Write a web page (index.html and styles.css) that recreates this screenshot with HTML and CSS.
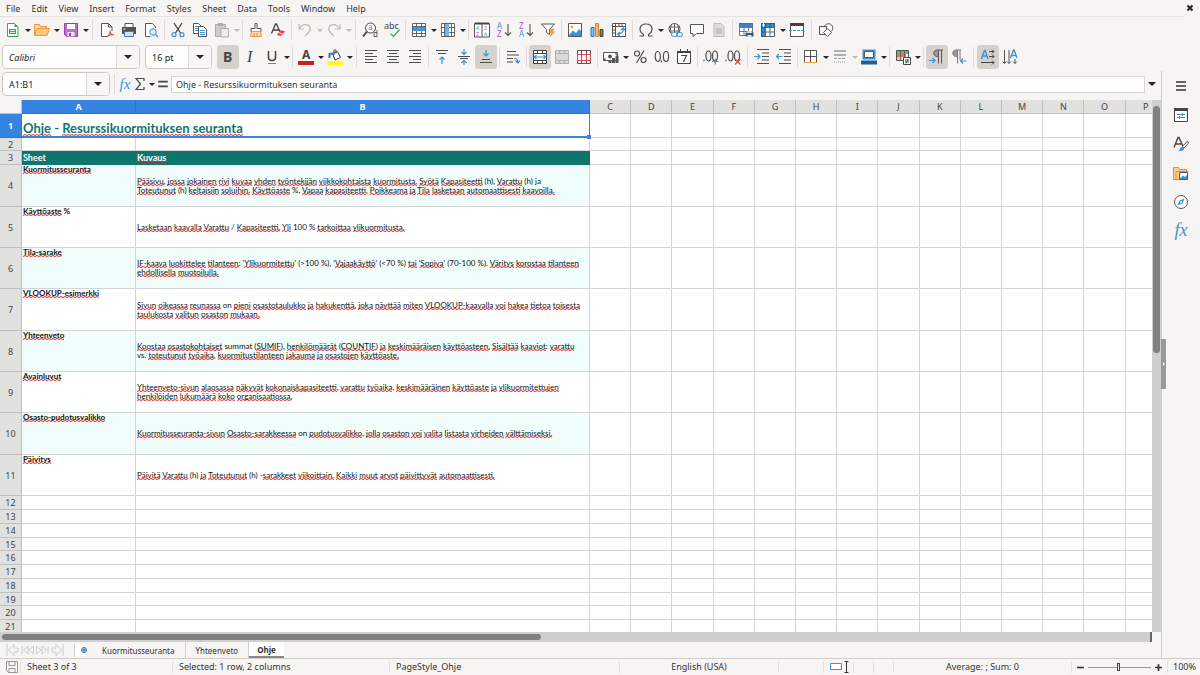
FILE: index.html
```
<!DOCTYPE html>
<html lang="fi">
<head>
	<meta charset="utf-8">
	<title>Ohje</title>
	<link rel="stylesheet" href="styles.css">
</head>
<body>
	<nav class="menubar">
		<button>File</button><button>Edit</button><button>View</button><button>Insert</button><button>Format</button><button>Styles</button><button>Sheet</button><button>Data</button><button>Tools</button><button>Window</button><button>Help</button>
		<button class="close" aria-label="Close document"><svg viewBox="0 0 8 8"><path d="M1.500 1.500L6.500 6.500M6.500 1.500L1.500 6.500" stroke="#222" stroke-width="1.900"/></svg></button>
	</nav>

	<!-- standard toolbar -->
	<div class="toolbar">
		<button class="tool" aria-label="New"><svg viewBox="0 0 16 16"><path d="M2.500 1.500h7l3.500 3.500v9.500h-10.500z" fill="#fff" stroke="#3fa557"/><path d="M9.500 1.500V5H13z" fill="#3fa557"/><path d="M4 7h7v5h-7z" fill="#3fa557"/><path d="M5 8.500h5M5 10.500h5" stroke="#fff" stroke-width=".8"/></svg></button><button class="drop" aria-label="New options"></button>
		<button class="tool" aria-label="Open"><svg viewBox="0 0 16 16"><path d="M.5 13.500V2.500h5l1 2h6v2" fill="#fbd79b" stroke="#e8973a"/><path d="M.5 13.500L3 6.500h12.500l-2.500 7z" fill="#fcc979" stroke="#e8973a"/></svg></button><button class="drop" aria-label="Open options"></button>
		<button class="tool" aria-label="Save"><svg viewBox="0 0 16 16"><path d="M1.500 1.500h13v13h-11l-2-2z" fill="#c46bd2" stroke="#8e44a3"/><path d="M4 2h8v5h-8z" fill="#fff"/><path d="M4.500 10h7v4.500h-7z" fill="#f3e3f6"/><path d="M6 11h2v3h-2z" fill="#8e44a3"/></svg></button><button class="drop" aria-label="Save options"></button>
		<span class="sep wide"></span>
		<button class="tool" aria-label="Export as PDF"><svg viewBox="0 0 16 16"><path d="M13 9V5L9.500 1.500h-7v13h6" fill="#fff" stroke="#555"/><path d="M9.500 1.500V5H13" fill="none" stroke="#555"/><path d="M8 14.500c3-2 3.500-4 3-6c0 2 1 4 4 4.500c-2.500-.5-5 0-7 1.500" fill="none" stroke="#e04a50" stroke-width="1.100"/></svg></button>
		<button class="tool" aria-label="Print"><svg viewBox="0 0 16 16"><path d="M4 5.500v-4h8v4" fill="#fff" stroke="#555"/><path d="M1 5h14v7h-14z" fill="#4f5357"/><path d="M3.500 9.500h9v5h-9z" fill="#cfe6f7" stroke="#3a7fb8"/><path d="M2.500 7h2" stroke="#fff"/></svg></button>
		<button class="tool" aria-label="Print preview"><svg viewBox="0 0 16 16"><path d="M12.500 6V5L9.500 1.500h-7v13h5" fill="#fff" stroke="#555"/><circle cx="10" cy="10" r="3.300" fill="#d8ecfa" stroke="#3a94d6"/><path d="M12.500 12.500l2.500 2.500" stroke="#3a94d6" stroke-width="1.300"/></svg></button>
		<span class="sep"></span>
		<button class="tool" aria-label="Cut"><svg viewBox="0 0 16 16"><path d="M4 1l6.500 10M12 1L5.500 11" stroke="#444" stroke-width="1.300"/><circle cx="4" cy="12.700" r="2" fill="none" stroke="#3a94d6" stroke-width="1.200"/><circle cx="12" cy="12.700" r="2" fill="none" stroke="#3a94d6" stroke-width="1.200"/></svg></button>
		<button class="tool" aria-label="Copy"><svg viewBox="0 0 16 16"><path d="M1.500 1.500h5l2.500 2.500v7.500h-7.500z" fill="#fff" stroke="#555"/><path d="M6.500 4.500h5l3 3v7h-8z" fill="#fff" stroke="#555"/><path d="M3 4.500h3M3 6.500h3M3 8.500h3M8 8.500h5M8 10.500h5M8 12.500h5" stroke="#3a94d6"/></svg></button>
		<button class="tool off" aria-label="Paste" disabled><svg viewBox="0 0 16 16"><path d="M1.500 2.500h10v12h-10z" fill="#ccc" stroke="#aaa"/><path d="M4 1h5v3h-5z" fill="#aaa"/><path d="M7 6.500h7.500v8.500h-7.500z" fill="#eee" stroke="#aaa"/></svg></button><button class="drop off" aria-label="Paste options" disabled></button>
		<span class="sep"></span>
		<button class="tool" aria-label="Clone formatting"><svg viewBox="0 0 16 16"><path d="M7 1.500h2v5h4v3h-10v-3h4z" fill="#fff" stroke="#555"/><path d="M3.500 9.500h9l1 5h-11z" fill="#fcd9a8" stroke="#e8973a"/><path d="M6 11v3M9 11v3" stroke="#e8973a"/></svg></button>
		<button class="tool" aria-label="Clear formatting"><svg viewBox="0 0 16 16"><path d="M1.500 11.500L5.500 2h1L10 10M3 8h6" fill="none" stroke="#444" stroke-width="1.300"/><path d="M7 12.500l4-4.500l4 1.500l-4 4.500l-3-.5z" fill="#e8454d"/><path d="M9 10.500l3.500 1.500" stroke="#fff" stroke-width=".8"/></svg></button>
		<span class="sep"></span>
		<button class="tool off" aria-label="Undo" disabled><svg viewBox="0 0 16 16"><path d="M2 2v5h5M2.500 6.500c3-5 9-5 10.500-1c1 3-1 5-5 8.500" fill="none" stroke="#bbb" stroke-width="1.200"/></svg></button><button class="drop off" aria-label="Undo list" disabled></button>
		<button class="tool off" aria-label="Redo" disabled><svg viewBox="0 0 16 16"><path d="M14 2v5h-5M13.500 6.500c-3-5-9-5-10.500-1c-1 3 1 5 5 8.500" fill="none" stroke="#bbb" stroke-width="1.200"/></svg></button><button class="drop off" aria-label="Redo list" disabled></button>
		<span class="sep wide"></span>
		<button class="tool" aria-label="Find and replace"><svg viewBox="0 0 16 16"><circle cx="8.500" cy="6" r="5" fill="#fff" stroke="#444"/><path d="M5 9.500L1 14.500" stroke="#444" stroke-width="2"/><text x="6" y="8" class="glyph blue">a</text><text x="11" y="15" class="glyph">d</text></svg></button>
		<button class="tool" aria-label="Spelling"><svg viewBox="0 0 16 16"><text x="0" y="7" class="glyph abc">abc</text><path d="M6.500 11.500l3 3l6-7" fill="none" stroke="#3fb56a" stroke-width="1.400"/></svg></button>
		<span class="sep"></span>
		<button class="tool" aria-label="Row"><svg viewBox="0 0 16 16"><path d="M1.500 1.500h13v13h-13z" fill="#fff"/><path d="M1 5h14v4h-14z" fill="#3a9ae0"/><path d="M1.500 1.500h13v13h-13zM5.500 1v4M10.500 1v4M5.500 9v6M10.500 9v6M1.500 11.500h13M1.500 4.500h13" fill="none" stroke="#555" stroke-width=".9"/></svg></button><button class="drop" aria-label="Row options"></button>
		<button class="tool" aria-label="Column"><svg viewBox="0 0 16 16"><path d="M1.500 1.500h13v13h-13z" fill="#fff"/><path d="M5 1h4v14h-4z" fill="#6db6ea"/><path d="M1.500 1.500h13v13h-13zM1 5.500h4M1 10.500h4M9 5.500h6M9 10.500h6M11.500 1v14M4.500 1v14" fill="none" stroke="#555" stroke-width=".9"/></svg></button><button class="drop" aria-label="Column options"></button>
		<span class="sep"></span>
		<button class="tool" aria-label="Sort"><svg viewBox="0 0 16 16"><path d="M.5 1.500h15v13.500h-15zM8 2v13" fill="#fff" stroke="#555"/><path d="M1 1.500h14" stroke="#444" stroke-width="2"/><text x="2" y="8" class="mini blue">A</text><text x="2" y="14" class="mini pink">Z</text><text x="10" y="8" class="mini pink">Z</text><text x="10" y="14" class="mini blue">A</text></svg></button>
		<button class="tool" aria-label="Sort ascending"><svg viewBox="0 0 16 16"><text x="1" y="7" class="glyph blue">A</text><text x="1" y="15" class="glyph pink">Z</text><path d="M12 2v11.500M9 10.500l3 3l3-3" fill="none" stroke="#555" stroke-width="1.100"/></svg></button>
		<button class="tool" aria-label="Sort descending"><svg viewBox="0 0 16 16"><text x="1" y="7" class="glyph pink">Z</text><text x="1" y="15" class="glyph blue">A</text><path d="M12 2v11.500M9 10.500l3 3l3-3" fill="none" stroke="#555" stroke-width="1.100"/></svg></button>
		<button class="tool" aria-label="AutoFilter"><svg viewBox="0 0 16 16"><path d="M1.500 2h13L9.500 7.500v5l-3-2v-3z" fill="#fff" stroke="#555"/><path d="M11 6.500h3.500l-1.500 3h2.500L9.500 15.500l1.500-4.500h-2z" fill="#f0a13c"/></svg></button>
		<span class="sep"></span>
		<button class="tool" aria-label="Image"><svg viewBox="0 0 16 16"><path d="M1.500 1.500h13v13h-13z" fill="#fff" stroke="#555"/><path d="M2 13l4-4.500l3 2.500l3-4l2 2v5h-12z" fill="#3a94d6"/><circle cx="5" cy="5" r="1.400" fill="#f0a13c"/></svg></button>
		<button class="tool" aria-label="Chart"><svg viewBox="0 0 16 16"><path d="M2 5.500h3v9h-3z" fill="#7dc1ef" stroke="#2a7cc0"/><path d="M6.500 1.500h3v13h-3z" fill="#f8b763" stroke="#d98528"/><path d="M11 7.500h3v7h-3z" fill="#777" stroke="#444"/></svg></button>
		<button class="tool" aria-label="Pivot table"><svg viewBox="0 0 16 16"><path d="M1.500 1.500h13v13h-13z" fill="#fff" stroke="#555"/><path d="M1.500 4.500h13M4.500 1.500v13M8 2v2M11 2v2M2 8h2M2 11h2" stroke="#555"/><path d="M10 8l2.500-2l1.500 2.500M12.500 6c0 4-2 6-6 6.500M9 10l-2.500 2.500l2.500 1.500" fill="none" stroke="#3a94d6" stroke-width="1.200"/></svg></button>
		<span class="sep"></span>
		<button class="tool" aria-label="Special character"><svg viewBox="0 0 16 16"><path d="M1.500 14h4v-1.500C.5 9.500.5 2 8 2s7.500 7.500 2.500 10.500v1.500h4" fill="none" stroke="#4d4d4d" stroke-width="1.200"/></svg></button><button class="drop" aria-label="More characters"></button>
		<button class="tool" aria-label="Hyperlink"><svg viewBox="0 0 16 16"><circle cx="7.500" cy="7" r="5.500" fill="#fff" stroke="#555"/><path d="M2 5h11M2 9h11M7.500 1.500v11M5 2c-2 3-2 7 0 10M10 2c2 3 2 7 0 10" fill="none" stroke="#555" stroke-width=".9"/><rect x="4.500" y="10.500" width="6" height="4" rx="2" fill="#fff" stroke="#3a94d6"/><rect x="9.500" y="10.500" width="6" height="4" rx="2" fill="none" stroke="#3a94d6"/></svg></button>
		<button class="tool" aria-label="Comment"><svg viewBox="0 0 16 16"><path d="M1.500 2.500h13v9h-7l-3.500 3v-3h-2.500z" fill="#fff" stroke="#555"/></svg></button>
		<button class="tool off" aria-label="Headers and footers" disabled><svg viewBox="0 0 16 16"><path d="M3 1.500h7l3 3v10h-10z" fill="#ddd" stroke="#bbb"/><path d="M5 6h6v6h-6z" fill="#c4c4c4"/></svg></button>
		<span class="sep"></span>
		<button class="tool" aria-label="Define print area"><svg viewBox="0 0 16 16"><path d="M1.500 1.500h13v12h-13z" fill="#fff"/><path d="M1 1h14v4h-14z" fill="#2e8ad8"/><path d="M1.500 1.500h13v12h-13zM6 1v13M10.500 1v13M1 5.500h14M1 9.500h14" fill="none" stroke="#5a6c7c" stroke-width=".9"/><path d="M7.500 10.500h8v4h-8z" fill="#4f5357"/><path d="M9.500 9h4v2h-4zM9.500 13h4v2.500h-4z" fill="#cfe6f7"/></svg></button>
		<button class="tool" aria-label="Freeze rows and columns"><svg viewBox="0 0 16 16"><path d="M1.500 1.500h13v13h-13z" fill="#fff"/><path d="M1 1h14v4h-14zM1 1h4v14h-4z" fill="#2e8ad8"/><path d="M1.500 1.500h13v13h-13zM5.500 1v14M10 1v14M1 5.500h14M1 10h14" fill="none" stroke="#456" stroke-width=".9"/><path d="M2 3h3M3.500 1v4" stroke="#fff"/></svg></button><button class="drop" aria-label="Freeze options"></button>
		<button class="tool" aria-label="Split window"><svg viewBox="0 0 16 16"><path d="M1.500 2.500h13v12h-13z" fill="#fff" stroke="#555"/><path d="M1 2.500h14" stroke="#444" stroke-width="3"/><path d="M0 8.500h16" stroke="#3a94d6" stroke-dasharray="3 1"/></svg></button>
		<span class="sep wide"></span>
		<button class="tool" aria-label="Show draw functions"><svg viewBox="0 0 16 16"><circle cx="10.500" cy="6" r="4.300" fill="#fff" stroke="#555"/><path d="M1.500 4.500h7v8h-7z" fill="#f5f4f3" stroke="#555"/><path d="M5.500 10.500l4-4l4 4l-4 4z" fill="#fff" stroke="#555"/></svg></button>
	</div>

	<!-- formatting toolbar -->
	<div class="toolbar">
		<div class="combo font-name"><input type="text" aria-label="Font name" value="Calibri"><button aria-label="Font list"></button></div>
		<div class="combo font-size"><input type="text" aria-label="Font size" value="16 pt"><button aria-label="Size list"></button></div>
		<button class="tool on" aria-label="Bold"><svg viewBox="0 0 16 16"><text x="3" y="13" class="letter bold">B</text></svg></button>
		<button class="tool" aria-label="Italic"><svg viewBox="0 0 16 16"><text x="5" y="13" class="letter italic">I</text></svg></button>
		<button class="tool" aria-label="Underline"><svg viewBox="0 0 16 16"><path d="M4.500 2v6.500c0 4 7 4 7 0V2" fill="none" stroke="#444" stroke-width="1.500"/><path d="M4 14.500h8" stroke="#3a94d6"/></svg></button><button class="drop" aria-label="Underline options"></button>
		<span class="sep"></span>
		<button class="tool" aria-label="Font color"><svg viewBox="0 0 16 16"><text x="4" y="10" class="letter small">A</text><path d="M0 12h16v4h-16z" fill="#c9211e"/></svg></button><button class="drop" aria-label="Font colors"></button>
		<button class="tool" aria-label="Background color"><svg viewBox="0 0 16 16"><path d="M5.500 4.500l5-2l3 6l-5.500 2.500z" fill="#fff" stroke="#444"/><path d="M7 6V1.500c0-1 2-1 2 0v3" fill="none" stroke="#444"/><path d="M2.500 9V5l4-.5" fill="none" stroke="#2a7cc0" stroke-width="2"/><path d="M0 12h16v4h-16z" fill="#ff0"/></svg></button><button class="drop" aria-label="Background colors"></button>
		<span class="sep wide"></span>
		<button class="tool" aria-label="Align left"><svg viewBox="0 0 16 16"><path d="M2 1.500h12M2 4.500h8M2 7.500h12M2 10.500h8M2 13.500h12" stroke="#4d4d4d"/></svg></button>
		<button class="tool" aria-label="Center"><svg viewBox="0 0 16 16"><path d="M2 1.500h12M4 4.500h8M2 7.500h12M4 10.500h8M2 13.500h12" stroke="#4d4d4d"/></svg></button>
		<button class="tool" aria-label="Align right"><svg viewBox="0 0 16 16"><path d="M2 1.500h12M6 4.500h8M2 7.500h12M6 10.500h8M2 13.500h12" stroke="#4d4d4d"/></svg></button>
		<span class="sep"></span>
		<button class="tool" aria-label="Align top"><svg viewBox="0 0 16 16"><path d="M2 1.500h12M4 4.500h8" stroke="#4d4d4d"/><path d="M8 15V8M5.500 10.500L8 8l2.500 2.500" fill="none" stroke="#3a94d6" stroke-width="1.200"/></svg></button>
		<button class="tool" aria-label="Center vertically"><svg viewBox="0 0 16 16"><path d="M2 7.500h12M4 9.500h8" stroke="#4d4d4d"/><path d="M8 0v5M5.500 3L8 5.500L10.500 3M8 16v-4.500M5.500 14L8 11.500l2.500 2.500" fill="none" stroke="#3a94d6" stroke-width="1.200"/></svg></button>
		<button class="tool on" aria-label="Align bottom"><svg viewBox="0 0 16 16"><path d="M2 13.500h12M4 10.500h8" stroke="#4d4d4d"/><path d="M8 1v6M5.500 4.500L8 7l2.500-2.500" fill="none" stroke="#3a94d6" stroke-width="1.200"/></svg></button>
		<span class="sep"></span>
		<button class="tool" aria-label="Wrap text"><svg viewBox="0 0 16 16"><path d="M2 2.500h9M2 6h12M2 9.500h6M2 13h6" stroke="#4d4d4d"/><path d="M9 9.500c3 0 4 1 4 4M10.500 11.500l2.500 2.500l2-2.500" fill="none" stroke="#3a94d6" stroke-width="1.200"/></svg></button>
		<span class="sep"></span>
		<button class="tool on" aria-label="Merge and center"><svg viewBox="0 0 16 16"><path d="M1.500 1.500h13v13h-13z" fill="#fff"/><path d="M1.500 1.500h13v13h-13zM5.500 1v4M10.500 1v4M5.500 11v4M10.500 11v4M1 4.500h14M1 11.500h14" fill="none" stroke="#444"/><path d="M2.500 8h11M4.500 6L2.500 8l2 2M11.500 6l2 2l-2 2" fill="none" stroke="#3a94d6" stroke-width="1.200"/></svg></button>
		<button class="tool off" aria-label="Merge cells" disabled><svg viewBox="0 0 16 16"><path d="M1.500 1.500h13v13h-13zM5.500 1v4M10.500 1v4M5.500 11v4M10.500 11v4M1 4.500h14M1 11.500h14" fill="#d9d9d9" stroke="#b0b0b0"/></svg></button>
		<button class="tool" aria-label="Split cells"><svg viewBox="0 0 16 16"><path d="M1.500 1.500h13v13h-13zM5.500 1v14M10.500 1v14M1 5.500h14M1 11.500h14" fill="#fff" stroke="#555"/><path d="M1.500 5.500v6h13v-6zM5.500 6v5M10.500 6v5" fill="#fff" stroke="#e04a50"/></svg></button>
		<span class="sep"></span>
		<button class="tool" aria-label="Format as currency"><svg viewBox="0 0 16 16"><path d="M.5 3.500h14v8h-14z" fill="#fff" stroke="#555"/><circle cx="7" cy="7.500" r="2" fill="#555"/><path d="M1 12v-2h2M12 5h2v2" fill="none" stroke="#444"/><path d="M9 9h3v5h-3zM12.500 7h3v7h-3zM5.500 11h3v3h-3z" fill="#555"/></svg></button><button class="drop" aria-label="Currency list"></button>
		<button class="tool" aria-label="Format as percent"><svg viewBox="0 0 16 16"><circle cx="5" cy="4.500" r="2.500" fill="none" stroke="#4d4d4d" stroke-width="1.200"/><circle cx="11.500" cy="11" r="2.500" fill="none" stroke="#4d4d4d" stroke-width="1.200"/><path d="M12 1.500L4.500 14" stroke="#4d4d4d" stroke-width="1.200"/></svg></button>
		<button class="tool" aria-label="Format as number"><svg viewBox="0 0 16 16"><ellipse cx="3.800" cy="7.500" rx="2.600" ry="5" fill="none" stroke="#4d4d4d" stroke-width="1.200"/><ellipse cx="12" cy="7.500" rx="2.600" ry="5" fill="none" stroke="#4d4d4d" stroke-width="1.200"/><path d="M7.500 11.500v2" stroke="#4d4d4d" stroke-width="1.200"/></svg></button>
		<button class="tool" aria-label="Format as date"><svg viewBox="0 0 16 16"><path d="M1.500 2.500h13v12h-13z" fill="#fff" stroke="#444"/><path d="M1 3h14" stroke="#444" stroke-width="2"/><path d="M4.500 0v3M11.500 0v3" stroke="#444"/><path d="M5 6.500h5.500L7.500 13" fill="none" stroke="#444" stroke-width="1.200"/></svg></button>
		<span class="sep"></span>
		<button class="tool" aria-label="Add decimal place"><svg viewBox="0 0 16 16"><path d="M1 10.500v2" stroke="#4d4d4d"/><ellipse cx="5.500" cy="7" rx="2.500" ry="5" fill="none" stroke="#4d4d4d" stroke-width="1.200"/><ellipse cx="12" cy="7" rx="2.500" ry="5" fill="none" stroke="#4d4d4d" stroke-width="1.200"/><path d="M9 12.500h6.500M12.300 9.500v6" stroke="#3a94d6" stroke-width="1.200"/></svg></button>
		<button class="tool" aria-label="Delete decimal place"><svg viewBox="0 0 16 16"><path d="M1 10.500v2" stroke="#4d4d4d"/><ellipse cx="5.500" cy="7" rx="2.500" ry="5" fill="none" stroke="#4d4d4d" stroke-width="1.200"/><ellipse cx="12" cy="7" rx="2.500" ry="5" fill="none" stroke="#4d4d4d" stroke-width="1.200"/><path d="M10 10l5.500 5.500M15.500 10L10 15.500" stroke="#e8454d" stroke-width="1.200"/></svg></button>
		<span class="sep wide"></span>
		<button class="tool" aria-label="Increase indent"><svg viewBox="0 0 16 16"><path d="M3 .5h12M8 4h7M8 7.500h7M8 11h7M3 14.500h12" stroke="#4d4d4d"/><path d="M0 7.500h6M3.500 5L6 7.500L3.500 10" fill="none" stroke="#3a94d6" stroke-width="1.200"/></svg></button>
		<button class="tool" aria-label="Decrease indent"><svg viewBox="0 0 16 16"><path d="M3 .5h12M8 4h7M8 7.500h7M8 11h7M3 14.500h12" stroke="#4d4d4d"/><path d="M6.500 7.500h-6M3 5L.5 7.500L3 10" fill="none" stroke="#3a94d6" stroke-width="1.200"/></svg></button>
		<span class="sep"></span>
		<button class="tool" aria-label="Borders"><svg viewBox="0 0 16 16"><path d="M1.500 1.500h12v12h-12zM7.500 1.500v12M1.500 7.500h12" fill="#fff" stroke="#555"/><path d="M1 13.500h13" stroke="#f0a13c"/></svg></button><button class="drop" aria-label="Border list"></button>
		<button class="tool off" aria-label="Border style" disabled><svg viewBox="0 0 16 16"><path d="M2 2h12M2 6h12" stroke="#999" stroke-width="1.500"/><path d="M2 9.500h12" stroke="#999" stroke-dasharray="3 1"/><path d="M2 13h12" stroke="#999" stroke-dasharray="1 1"/></svg></button><button class="drop off" aria-label="Border styles" disabled></button>
		<button class="tool" aria-label="Border color"><svg viewBox="0 0 16 16"><path d="M2.500 1.500h11v8h-11z" fill="#fff" stroke="#4b8fc8" stroke-width="2"/><path d="M3.500 2.500h9v6h-9z" fill="#fff" stroke="#555"/><path d="M0 11.500h16v4h-16z" fill="#1f5f9e"/></svg></button><button class="drop" aria-label="Border colors"></button>
		<span class="sep"></span>
		<button class="tool" aria-label="Conditional formatting"><svg viewBox="0 0 16 16"><path d="M1.500 1.500h12v10h-12z" fill="#fff" stroke="#555"/><path d="M2 2h11v3h-11z" fill="#62b878"/><path d="M2 5h9v3h-9z" fill="#e8735a"/><path d="M2 8h5v3h-5z" fill="#f8c779"/><path d="M5.500 1v10M9.500 1v10" stroke="#555" stroke-width=".7"/><path d="M8.500 8.500h7v7h-7z" fill="#fff" stroke="#444"/><path d="M10 11h4M10 13h4M13 10l-2 4.500" stroke="#444" stroke-width=".9"/></svg></button><button class="drop" aria-label="Conditional formats"></button>
		<span class="sep"></span>
		<button class="tool on" aria-label="Left to right"><svg viewBox="0 0 16 16"><path d="M9.500 1h-1c-5 0-5 6.500 0 6.500h1z" fill="#999" stroke="#555"/><path d="M9.500 1h4.500M9.500 1v13.500M12.500 1v13.500" stroke="#555"/><path d="M0 11.500h6M3.500 9L6 11.500L3.500 14" fill="none" stroke="#3a94d6" stroke-width="1.200"/></svg></button>
		<button class="tool" aria-label="Right to left"><svg viewBox="0 0 16 16"><path d="M6.500 1h-1c-5 0-5 6.500 0 6.500h1z" fill="#999" stroke="#777"/><path d="M6.500 1h3.500M6.500 1v13.500M9 1v10" stroke="#777"/><path d="M15.500 12h-6M12 9.500L9.500 12l2.500 2.500" fill="none" stroke="#3a94d6" stroke-width="1.200"/></svg></button>
		<span class="sep wide"></span>
		<button class="tool on" aria-label="Text direction from left to right"><svg viewBox="0 0 16 16"><path d="M1.500 10L4.500 1.500h.6L8 10M2.500 7h5" fill="none" stroke="#3a94d6" stroke-width="1.400"/><path d="M9 2.500h5M12 .5l2 2l-2 2M9 7.500h5M12 5.500l2 2l-2 2M1 13.500h13M12 11.500l2 2l-2 2" fill="none" stroke="#444"/></svg></button>
		<button class="tool" aria-label="Text direction from top to bottom"><svg viewBox="0 0 16 16"><path d="M8.500 9L11.500 1h.6L15 9M9.500 6.500h5" fill="none" stroke="#3a94d6" stroke-width="1.400"/><path d="M2.500 1v13.500M.5 12.500l2 2l2-2M7 1v13.500M5 12.500l2 2l2-2M13 10v4.500M11 12.500l2 2l2-2" fill="none" stroke="#555"/></svg></button>
	</div>

	<div class="workspace">
		<main class="document">
			<div class="formula-bar">
				<div class="combo name-box"><input type="text" aria-label="Name box" value="A1:B1"><button aria-label="Name list"></button></div>
				<span class="sep"></span>
				<button class="fx" aria-label="Function wizard"><i>fx</i></button>
				<button class="sum" aria-label="Sum"><svg viewBox="0 0 12 14"><path d="M10 4V1.500H2L6.500 7L2 12.500h8V10" fill="none" stroke="#4d4d4d" stroke-width="1.200"/></svg></button><button class="drop" aria-label="Select function"></button>
				<button class="equals" aria-label="Formula"><svg viewBox="0 0 10 8"><path d="M1 2h8M1 6h8" stroke="#444" stroke-width="1.500"/></svg></button>
				<input class="formula" type="text" aria-label="Input line" value="Ohje - Resurssikuormituksen seuranta">
				<button class="drop big" aria-label="Expand formula bar"></button>
			</div>

			<div class="sheet-area">
				<div class="sheet">
					<table>
						<colgroup><col class="col-head"><col class="col-a"><col class="col-b"><col><col><col><col><col><col><col><col><col><col><col><col><col><col></colgroup>
						<thead>
							<tr><th></th><th class="picked">A</th><th class="picked">B</th><th>C</th><th>D</th><th>E</th><th>F</th><th>G</th><th>H</th><th>I</th><th>J</th><th>K</th><th>L</th><th>M</th><th>N</th><th>O</th><th>P</th></tr>
						</thead>
						<tbody>
							<tr class="title"><th class="picked">1</th><td colspan="2" class="selected"><u>Ohje</u> - <u>Resurssikuormituksen</u> <u>seuranta</u><span class="handle"></span></td><td></td><td></td><td></td><td></td><td></td><td></td><td></td><td></td><td></td><td></td><td></td><td></td><td></td><td></td></tr>
							<tr class="low"><th>2</th><td></td><td></td><td></td><td></td><td></td><td></td><td></td><td></td><td></td><td></td><td></td><td></td><td></td><td></td><td></td><td></td></tr>
							<tr class="heading"><th>3</th><td class="sheet-label">Sheet</td><td><u>Kuvaus</u></td><td></td><td></td><td></td><td></td><td></td><td></td><td></td><td></td><td></td><td></td><td></td><td></td><td></td><td></td></tr>
							<tr class="entry tint"><th>4</th><td><u>Kuormitusseuranta</u></td><td><u>Pääsivu</u>, <u>jossa</u> <u>jokainen</u> <u>rivi</u> <u>kuvaa</u> <u>yhden</u> <u>työntekijän</u> <u>viikkokohtaista</u> <u>kuormitusta.</u> <u>Syötä</u> <u>Kapasiteetti</u> (h), <u>Varattu</u> (h) ja<br><u>Toteutunut</u> (h) <u>keltaisiin</u> <u>soluihin.</u> <u>Käyttöaste</u> %, <u>Vapaa</u> <u>kapasiteetti</u>, <u>Poikkeama</u> <u>ja</u> <u>Tila</u> <u>lasketaan</u> <u>automaattisesti</u> <u>kaavoilla.</u></td><td></td><td></td><td></td><td></td><td></td><td></td><td></td><td></td><td></td><td></td><td></td><td></td><td></td><td></td></tr>
							<tr class="entry"><th>5</th><td><u>Käyttöaste</u> %</td><td><u>Lasketaan</u> <u>kaavalla</u> <u>Varattu</u> / <u>Kapasiteetti.</u> <u>Yli</u> 100 % <u>tarkoittaa</u> <u>ylikuormitusta.</u></td><td></td><td></td><td></td><td></td><td></td><td></td><td></td><td></td><td></td><td></td><td></td><td></td><td></td><td></td></tr>
							<tr class="entry tint"><th>6</th><td><u>Tila-sarake</u></td><td><u>IF-kaava</u> <u>luokittelee</u> <u>tilanteen</u>: '<u>Ylikuormitettu</u>' (&gt;100 %), '<u>Vajaakäyttö</u>' (&lt;70 %) <u>tai</u> '<u>Sopiva</u>' (70-100 %). <u>Väritys</u> <u>korostaa</u> <u>tilanteen</u><br><u>ehdollisella</u> <u>muotoilulla.</u></td><td></td><td></td><td></td><td></td><td></td><td></td><td></td><td></td><td></td><td></td><td></td><td></td><td></td><td></td></tr>
							<tr class="entry"><th>7</th><td><u>VLOOKUP-esimerkki</u></td><td><u>Sivun</u> <u>oikeassa</u> <u>reunassa</u> on <u>pieni</u> <u>osastotaulukko</u> <u>ja</u> <u>hakukenttä</u>, <u>joka</u> <u>näyttää</u> <u>miten</u> <u>VLOOKUP-kaavalla</u> <u>voi</u> <u>hakea</u> <u>tietoa</u> <u>toisesta</u><br><u>taulukosta</u> <u>valitun</u> <u>osaston</u> <u>mukaan.</u></td><td></td><td></td><td></td><td></td><td></td><td></td><td></td><td></td><td></td><td></td><td></td><td></td><td></td><td></td></tr>
							<tr class="entry tint"><th>8</th><td><u>Yhteenveto</u></td><td><u>Koostaa</u> <u>osastokohtaiset</u> summat (<u>SUMIF</u>), <u>henkilömäärät</u> (<u>COUNTIF</u>) <u>ja</u> <u>keskimääräisen</u> <u>käyttöasteen.</u> <u>Sisältää</u> <u>kaaviot</u>: <u>varattu</u><br>vs. <u>toteutunut</u> <u>työaika</u>, <u>kuormitustilanteen</u> <u>jakauma</u> <u>ja</u> <u>osastojen</u> <u>käyttöaste.</u></td><td></td><td></td><td></td><td></td><td></td><td></td><td></td><td></td><td></td><td></td><td></td><td></td><td></td><td></td></tr>
							<tr class="entry"><th>9</th><td><u>Avainluvut</u></td><td><u>Yhteenveto-sivun</u> <u>alaosassa</u> <u>näkyvät</u> <u>kokonaiskapasiteetti</u>, <u>varattu</u> <u>työaika</u>, <u>keskimääräinen</u> <u>käyttöaste</u> <u>ja</u> <u>ylikuormitettujen</u><br><u>henkilöiden</u> <u>lukumäärä</u> <u>koko</u> <u>organisaatiossa.</u></td><td></td><td></td><td></td><td></td><td></td><td></td><td></td><td></td><td></td><td></td><td></td><td></td><td></td><td></td></tr>
							<tr class="entry tint"><th>10</th><td><u>Osasto-pudotusvalikko</u></td><td><u>Kuormitusseuranta-sivun</u> <u>Osasto-sarakkeessa</u> on <u>pudotusvalikko</u>, <u>jolla</u> <u>osaston</u> <u>voi</u> <u>valita</u> <u>listasta</u> <u>virheiden</u> <u>välttämiseksi.</u></td><td></td><td></td><td></td><td></td><td></td><td></td><td></td><td></td><td></td><td></td><td></td><td></td><td></td><td></td></tr>
							<tr class="entry"><th>11</th><td><u>Päivitys</u></td><td><u>Päivitä</u> <u>Varattu</u> (h) <u>ja</u> <u>Toteutunut</u> (h) -<u>sarakkeet</u> <u>viikoittain.</u> <u>Kaikki</u> <u>muut</u> <u>arvot</u> <u>päivittyvät</u> <u>automaattisesti.</u></td><td></td><td></td><td></td><td></td><td></td><td></td><td></td><td></td><td></td><td></td><td></td><td></td><td></td><td></td></tr>
							<tr><th>12</th><td></td><td></td><td></td><td></td><td></td><td></td><td></td><td></td><td></td><td></td><td></td><td></td><td></td><td></td><td></td><td></td></tr>
							<tr><th>13</th><td></td><td></td><td></td><td></td><td></td><td></td><td></td><td></td><td></td><td></td><td></td><td></td><td></td><td></td><td></td><td></td></tr>
							<tr><th>14</th><td></td><td></td><td></td><td></td><td></td><td></td><td></td><td></td><td></td><td></td><td></td><td></td><td></td><td></td><td></td><td></td></tr>
							<tr class="low"><th>15</th><td></td><td></td><td></td><td></td><td></td><td></td><td></td><td></td><td></td><td></td><td></td><td></td><td></td><td></td><td></td><td></td></tr>
							<tr><th>16</th><td></td><td></td><td></td><td></td><td></td><td></td><td></td><td></td><td></td><td></td><td></td><td></td><td></td><td></td><td></td><td></td></tr>
							<tr><th>17</th><td></td><td></td><td></td><td></td><td></td><td></td><td></td><td></td><td></td><td></td><td></td><td></td><td></td><td></td><td></td><td></td></tr>
							<tr><th>18</th><td></td><td></td><td></td><td></td><td></td><td></td><td></td><td></td><td></td><td></td><td></td><td></td><td></td><td></td><td></td><td></td></tr>
							<tr class="low"><th>19</th><td></td><td></td><td></td><td></td><td></td><td></td><td></td><td></td><td></td><td></td><td></td><td></td><td></td><td></td><td></td><td></td></tr>
							<tr><th>20</th><td></td><td></td><td></td><td></td><td></td><td></td><td></td><td></td><td></td><td></td><td></td><td></td><td></td><td></td><td></td><td></td></tr>
							<tr><th>21</th><td></td><td></td><td></td><td></td><td></td><td></td><td></td><td></td><td></td><td></td><td></td><td></td><td></td><td></td><td></td><td></td></tr>
						</tbody>
					</table>
				</div>
				<div class="vscroll"><div class="thumb"></div></div>
			</div>
			<div class="hscroll"><div class="thumb"></div></div>

			<div class="tabs">
				<button class="nav" aria-label="First sheet"><svg viewBox="0 0 14 14"><path d="M1.500 1v12M12.500 5h-4V1.500L3 7l5.500 5.500V9h4z" fill="none" stroke="#ccc"/></svg></button>
				<button class="nav" aria-label="Previous sheet"><svg viewBox="0 0 14 14"><path d="M1.500 3v8M7.500 3L3 7l4.500 4zM13 3L8.500 7l4.500 4z" fill="none" stroke="#ccc"/></svg></button>
				<button class="nav" aria-label="Next sheet"><svg viewBox="0 0 14 14"><path d="M12.500 3v8M6.500 3L11 7l-4.500 4zM1 3l4.500 4L1 11z" fill="none" stroke="#ccc"/></svg></button>
				<button class="nav" aria-label="Last sheet"><svg viewBox="0 0 14 14"><path d="M12.500 1v12M1.500 5h4V1.500L11 7l-5.500 5.500V9h-4z" fill="none" stroke="#ccc"/></svg></button>
				<button class="add" aria-label="Add sheet"><svg viewBox="0 0 14 14"><path d="M0 1h8l3 3v9h-11z" fill="#fff"/><path d="M.5 1v12.500" stroke="#ccc"/><circle cx="10" cy="7" r="2.500" fill="#fff" stroke="#2a6cb8"/><path d="M8 7h4M10 5v4" stroke="#2a6cb8"/></svg></button>
				<button class="tab">Kuormitusseuranta</button>
				<button class="tab">Yhteenveto</button>
				<button class="tab current">Ohje</button>
			</div>
		</main>

		<aside class="sidebar">
			<button class="grip" aria-label="Hide sidebar"></button>
			<button aria-label="Sidebar settings"><svg viewBox="0 0 16 16"><path d="M3 4h10M3 8h10M3 12h10" stroke="#333" stroke-width="1.500"/></svg></button>
			<button aria-label="Properties"><svg viewBox="0 0 16 16"><path d="M1.500 1.500h13v13h-13z" fill="#fff" stroke="#444"/><path d="M1 2.500h14" stroke="#444" stroke-width="3"/><path d="M4 7.500h8M4 10.500h8M9.500 6v3M6.500 9v3" stroke="#3a94d6"/></svg></button>
			<button aria-label="Styles"><svg viewBox="0 0 16 16"><path d="M1 11.500L5 1.500h1l4 9M2.500 8h6" fill="none" stroke="#444" stroke-width="1.400"/><path d="M14.500 5L9.500 10.500l1.500 1.500L15.500 7z" fill="#fff" stroke="#555"/><path d="M9 11c2 0 2.500 1 2 2.500c-1 1.500-3 1.500-6 1.500c2-.5 2-4 4-4z" fill="#3a94d6"/></svg></button>
			<button aria-label="Gallery"><svg viewBox="0 0 16 16"><path d="M.5 14.500v-12h5l1 2h7v10z" fill="#fcd08c" stroke="#e8873a"/><path d="M3 14.500V6.500h12.500" fill="none" stroke="#e8873a"/><path d="M6.500 7.500h8v7h-8z" fill="#fff" stroke="#456"/><path d="M7 13.500l3-3l2 1.500l2-2v4h-7z" fill="#3a94d6"/></svg></button>
			<button aria-label="Navigator"><svg viewBox="0 0 16 16"><circle cx="8" cy="8" r="6.500" fill="#fff" stroke="#555"/><path d="M11.500 4.500L9.500 9.500L4.500 11.500L6.500 6.500z" fill="#3a94d6"/><circle cx="8" cy="8" r="1" fill="#fff"/></svg></button>
			<button class="fx" aria-label="Functions"><i>fx</i></button>
		</aside>
	</div>

	<footer class="status">
		<svg class="disk" viewBox="0 0 12 12"><path d="M.5.5h11v11h-9l-2-2zM3 1v3.500h6V1M3 11.500V7.500h6v4" fill="none" stroke="#999"/></svg>
		<span class="part sheets">Sheet 3 of 3</span>
		<span class="part picked-info">Selected: 1 row, 2 columns</span>
		<span class="part style">PageStyle_Ohje</span>
		<span class="part language">English (USA)</span>
		<span class="part insert-mode"></span>
		<span class="part mode"><svg viewBox="0 0 20 12"><path d="M.5 2.500h11v6h-11z" fill="#fff" stroke="#3a94d6"/><path d="M14.500.5h4M14.500 11.500h4M16.500.5v11" stroke="#333"/></svg></span>
		<span class="part blank"></span>
		<span class="part blank"></span>
		<span class="part result">Average: ; Sum: 0</span>
		<span class="part zoom"><button aria-label="Zoom out"><svg viewBox="0 0 8 8"><path d="M1 4h6" stroke="#333" stroke-width="1.500"/></svg></button><input type="range" aria-label="Zoom" min="0" max="100" value="49"><button aria-label="Zoom in"><svg viewBox="0 0 8 8"><path d="M1 4h6M4 1v6" stroke="#333" stroke-width="1.500"/></svg></button></span>
		<span class="part percent">100%</span>
	</footer>
</body>
</html>
```
FILE: styles.css
```
* {
	box-sizing: border-box;
}

body {
	margin: 0;
	height: 100vh;
	display: flex;
	flex-direction: column;
	background: #f6f5f4;
	color: #333;
	font-family: "Noto Sans", sans-serif;
	font-size: 9px;
	overflow: hidden;
}

button, input {
	font: inherit;
	color: inherit;
	margin: 0;
	padding: 0;
	border: 0;
	background: none;
}

svg {
	display: block;
	overflow: visible;
}

/* menu */
.menubar {
	display: flex;
	gap: 11px;
	align-items: center;
	height: 17px;
	padding: 0 6px;
	margin-right: 16px;
	border-bottom: 1px solid #e4e2e0;
}

.close {
	margin-left: auto;
	margin-right: -16px;
}

.close svg {
	width: 8px;
	height: 8px;
}

/* toolbars */
.toolbar {
	display: flex;
	align-items: center;
	height: 27px;
	padding: 0 0 1px 2px;
}

.tool {
	width: 22px;
	height: 24px;
	display: flex;
	align-items: center;
	justify-content: center;
	border-radius: 3px;
	flex: none;
}

.tool svg {
	width: 16px;
	height: 16px;
}

.tool.on {
	background: #d5d1cd;
}

.drop {
	width: 7px;
	height: 24px;
	flex: none;
	display: flex;
	align-items: center;
	justify-content: center;
}

.drop::after, .combo button::after {
	content: "";
	border: 3px solid transparent;
	border-top-color: #222;
	border-bottom: 0;
}

.drop.off::after {
	border-top-color: #bbb;
}

.sep {
	width: 5px;
	height: 20px;
	flex: none;
	background: linear-gradient(#dedcda, #dedcda) center / 1px 100% no-repeat;
}

.sep.wide {
	width: 7px;
}

.glyph, .mini, .letter {
	font-family: "Noto Sans", sans-serif;
	font-size: 8px;
	line-height: 1;
	fill: #444;
}

.abc {
	font-size: 9px;
}

.mini {
	font-size: 5px;
}

.blue {
	fill: #3a94d6;
}

.pink {
	fill: #b54fc4;
}

.letter {
	font-size: 14px;
}

.bold {
	font-weight: bold;
}

.italic {
	font-family: "Liberation Serif", serif;
	font-style: italic;
	font-size: 16px;
}

.small {
	font-size: 12px;
	font-weight: bold;
}

.combo {
	display: flex;
	flex: none;
	height: 24px;
	background: #fff;
	border: 1px solid #cdc7c2;
	border-radius: 4px;
	overflow: hidden;
}

.combo input {
	flex: 1;
	min-width: 0;
	padding-left: 6px;
	color: #222;
}

.combo button {
	width: 23px;
	display: flex;
	align-items: center;
	justify-content: center;
	background: #f8f7f6;
	border-left: 1px solid #dedad7;
}

.combo button::after {
	border-width: 4px 4px 0;
}

.font-name {
	width: 138px;
	margin-right: 5px;
}

.font-name input {
	font-style: italic;
}

.font-size {
	width: 67px;
	margin-right: 5px;
}

/* document and sidebar */
.workspace {
	flex: 1;
	display: flex;
	min-height: 0;
}

.document {
	flex: 1;
	min-width: 0;
	display: flex;
	flex-direction: column;
}

.formula-bar {
	display: flex;
	align-items: center;
	height: 29px;
	padding: 0 2px 3px;
	flex: none;
}

.name-box {
	width: 108px;
	margin-right: 2px;
}

.fx {
	color: #3a94d6;
	font-family: "Liberation Serif", serif;
	font-size: 15px;
	width: 16px;
}

.sum svg {
	width: 14px;
	height: 14px;
}

.formula-bar .drop {
	width: 10px;
}

.equals svg {
	width: 12px;
	height: 10px;
}

.formula {
	flex: 1;
	min-width: 0;
	height: 17px;
	margin-left: 2px;
	padding-left: 4px;
	background: #fff;
	border: 1px solid #d9d6d3;
}

.formula-bar .big {
	width: 14px;
}

.formula-bar .big::after {
	border-width: 4px 4px 0;
}

.sheet-area {
	flex: 1;
	display: flex;
	min-height: 0;
}

.sheet {
	flex: 1;
	min-width: 0;
	overflow: hidden;
	background: #fff;
}

table {
	table-layout: fixed;
	width: 1167px;
	border-collapse: separate;
	border-spacing: 0;
}

.col-head {
	width: 22px;
}

.col-a {
	width: 114px;
}

.col-b {
	width: 454px;
}

tr {
	height: 14px;
}

.low {
	height: 13px;
}

th, td {
	padding: 0;
	line-height: 9px;
	border-right: 1px solid #d4d4d4;
	border-bottom: 1px solid #d4d4d4;
}

th {
	background: #e1e1e0;
	border-color: #c0c0c0;
	font-weight: normal;
	color: #444;
}

thead th:first-child {
	background: #f6f5f4;
}

th.picked {
	background: #3584e4;
	border-color: #2d74cc;
	color: #fff;
	font-weight: bold;
}

td {
	font-family: Lato, sans-serif;
	font-size: 8px;
	color: #111;
	white-space: nowrap;
	padding-left: 1px;
}

/* spelling marks */
u {
	text-decoration: none;
	background: url("data:image/svg+xml,%3Csvg xmlns='http://www.w3.org/2000/svg' width='4' height='2'%3E%3Cpath d='M0 1.500L2 .5L4 1.500' fill='none' stroke='%23e0202a'/%3E%3C/svg%3E") 0 100% / 4px 2px repeat-x;
}

.title {
	height: 24px;
}

.selected {
	position: relative;
	color: #0f766e;
	font-size: 13px;
	font-weight: bold;
	line-height: 16px;
	padding-top: 6px;
	border-right: 1px solid #3584e4;
	border-bottom: 2px solid #3584e4;
}

.handle {
	position: absolute;
	right: -2px;
	bottom: -3px;
	width: 4px;
	height: 4px;
	background: #3584e4;
}

.heading td:nth-child(2), .heading td:nth-child(3) {
	background: #0f766e;
	border-color: #0f766e;
	color: #fff;
	font-size: 9px;
	font-weight: bold;
}

.entry {
	height: 41px;
}

.entry:nth-child(3n+1) {
	height: 42px;
}

.entry td:nth-child(2) {
	font-weight: bold;
	vertical-align: top;
}

.tint td:nth-child(2), .tint td:nth-child(3) {
	background: #f0fdfa;
}

/* scroll bars */
.vscroll {
	width: 9px;
	padding: 6px 1px 0;
	background: #cfcfcf;
}

.vscroll .thumb {
	height: 47%;
	border-radius: 4px;
	background: #808080;
}

.hscroll {
	height: 10px;
	flex: none;
	margin-right: 9px;
	padding: 2px;
	background: #cfcfcf;
	border-right: 2px solid #666;
}

.hscroll .thumb {
	width: 47%;
	height: 6px;
	border-radius: 3px;
	background: #808080;
}

/* sheet tabs */
.tabs {
	display: flex;
	height: 16px;
	flex: none;
	padding-left: 5px;
}

.nav svg {
	width: 15px;
	height: 14px;
}

.add {
	margin: 0 4px 0 9px;
}

.add svg {
	width: 14px;
	height: 14px;
}

.tab {
	padding: 0 10px;
	font-size: 8px;
	border-right: 1px solid #d0d0d0;
}

.tab.current {
	padding: 0 8px;
	background: #fff;
	font-weight: bold;
	border-right: 0;
	border-bottom: 2px solid #888;
}

.sidebar {
	position: relative;
	width: 39px;
	border-left: 1px solid #ccc;
	display: flex;
	flex-direction: column;
	align-items: center;
}

.sidebar button {
	width: 22px;
	height: 29px;
	display: flex;
	align-items: center;
	justify-content: center;
}

.sidebar svg {
	width: 16px;
	height: 16px;
}

.sidebar .fx {
	font-size: 18px;
}

.sidebar .grip {
	position: absolute;
	left: -1px;
	top: 268px;
	width: 5px;
	height: 50px;
	background: #999;
}

.grip::after {
	content: "";
	border: 2px solid transparent;
	border-left-color: #fff;
	border-right: 0;
}

/* status bar */
.status {
	display: flex;
	align-items: center;
	height: 17px;
	flex: none;
	border-top: 1px solid #d0cdca;
	padding-left: 6px;
}

.disk {
	width: 12px;
	height: 12px;
}

.part {
	height: 12px;
	line-height: 12px;
	border-left: 1px solid #e2e0de;
	flex: none;
}

.sheets {
	width: 152px;
	margin-left: 2px;
	padding-left: 6px;
}

.picked-info {
	width: 217px;
	padding-left: 6px;
}

.style {
	width: 230px;
	padding-left: 6px;
}

.language {
	flex: 1;
	text-align: center;
}

.insert-mode {
	width: 45px;
}

.mode {
	width: 30px;
	padding-left: 6px;
}

.mode svg {
	width: 20px;
	height: 12px;
}

.blank {
	width: 20px;
}

.result {
	width: 178px;
	text-align: center;
}

.zoom {
	width: 96px;
	display: flex;
	align-items: center;
	padding: 0 4px;
}

.zoom svg {
	width: 9px;
	height: 9px;
}

.zoom input {
	flex: 1;
	min-width: 0;
	margin: 0 3px;
	height: 10px;
	appearance: none;
	background: linear-gradient(#999, #999) center / 100% 1px no-repeat;
}

.zoom input::-webkit-slider-thumb {
	appearance: none;
	width: 3px;
	height: 8px;
	background: #eee;
	border: 1px solid #444;
}

.percent {
	width: 33px;
	padding-left: 5px;
}
```
